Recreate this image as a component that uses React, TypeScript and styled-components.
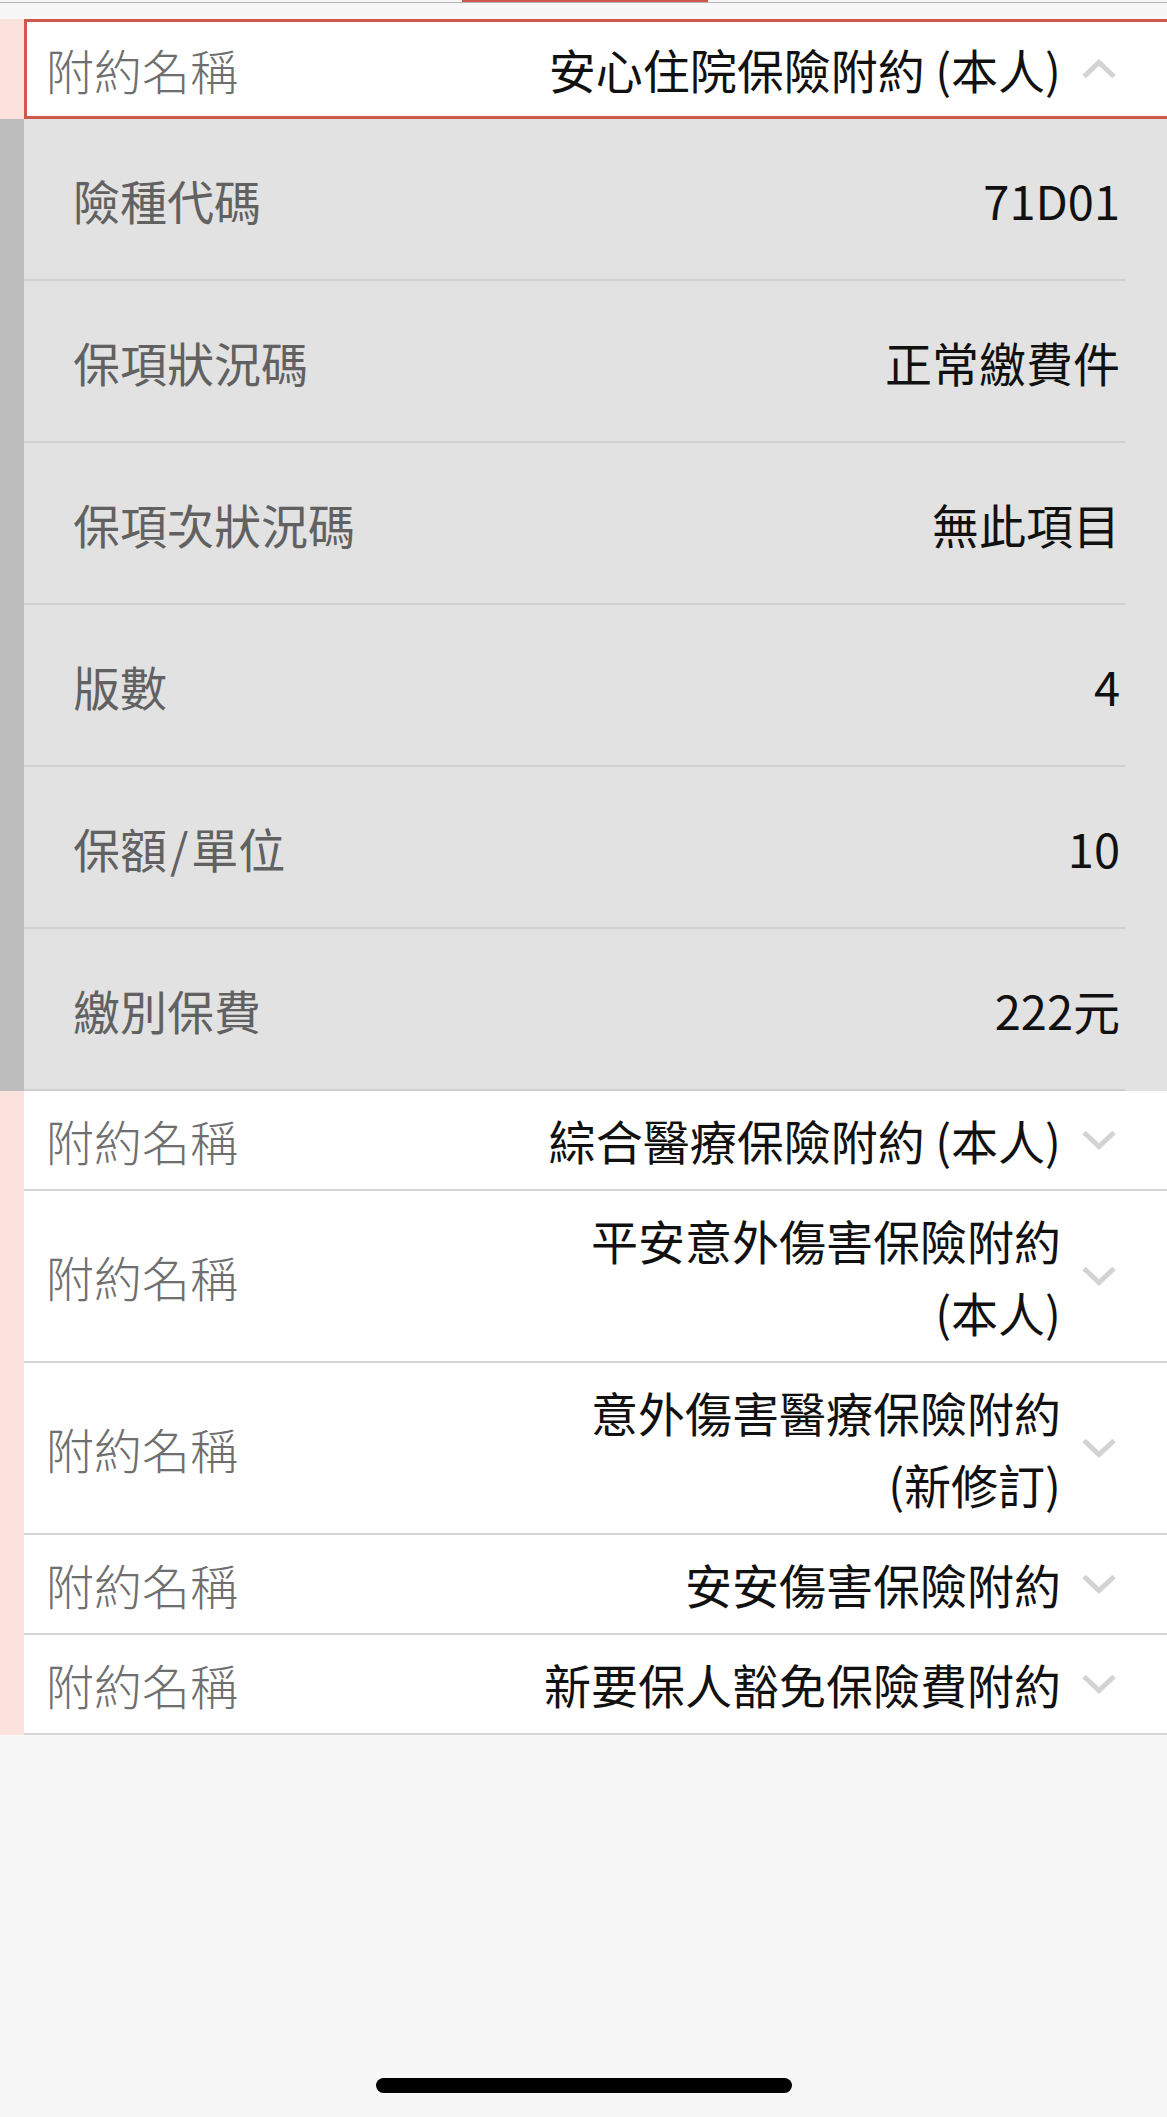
import React from "react";
import styled, { createGlobalStyle } from "styled-components";

type Detail = { label: string; value: string };
type Rider = { label: string; value: string; open?: boolean; details?: Detail[] };

const riders: Rider[] = [
  {
    label: "附約名稱",
    value: "安心住院保險附約 (本人)",
    open: true,
    details: [
      { label: "險種代碼", value: "71D01" },
      { label: "保項狀況碼", value: "正常繳費件" },
      { label: "保項次狀況碼", value: "無此項目" },
      { label: "版數", value: "4" },
      { label: "保額\u200a/\u200a單位", value: "10" },
      { label: "繳別保費", value: "222元" },
    ],
  },
  { label: "附約名稱", value: "綜合醫療保險附約 (本人)" },
  { label: "附約名稱", value: "平安意外傷害保險附約\n(本人)" },
  { label: "附約名稱", value: "意外傷害醫療保險附約\n(新修訂)" },
  { label: "附約名稱", value: "安安傷害保險附約" },
  { label: "附約名稱", value: "新要保人豁免保險費附約" },
];

const Chevron = ({ up }: { up?: boolean }) => (
  <ChevronIcon width="36" height="20" viewBox="0 0 36 20">
    <polyline
      points={up ? "3,17.5 18,3.5 33,17.5" : "3,2.5 18,16.5 33,2.5"}
      fill="none"
      stroke="#d3d3d3"
      strokeWidth="5"
    />
  </ChevronIcon>
);

const App = () => {
  return (
    <Screen>
      <GlobalStyle />
      <TabTrack>
        <TabIndicator />
      </TabTrack>
      <List>
        {riders.map((r, i) => (
          <Item key={i}>
            <HeaderRow>
              <Rail $tone="#fce2dc" />
              <Header $active={!!r.open}>
                <HeaderLabel>{r.label}</HeaderLabel>
                <HeaderValue>{r.value}</HeaderValue>
                <Chevron up={r.open} />
              </Header>
            </HeaderRow>
            {r.open && r.details && (
              <Panel>
                <Rail $tone="#bdbdbd" />
                <DetailList>
                  {r.details.map((d) => (
                    <DetailRow key={d.label}>
                      <DetailLabel>{d.label}</DetailLabel>
                      <DetailValue>{d.value}</DetailValue>
                    </DetailRow>
                  ))}
                </DetailList>
              </Panel>
            )}
          </Item>
        ))}
      </List>
      <Spacer />
      <HomeIndicator />
    </Screen>
  );
};

export default App;

const GlobalStyle = createGlobalStyle`
  body {
    margin: 0;
    background: #f7f7f7;
    font-family: "Noto Sans CJK TC", "Noto Sans", sans-serif;
  }
`;

const Screen = styled.div`
  min-height: 100vh;
  display: flex;
  flex-direction: column;
  background: #f7f7f7;
`;

const TabTrack = styled.div`
  height: 2px;
  border-bottom: 1px solid #b4b4b4;
  display: flex;
`;

const TabIndicator = styled.div`
  margin-left: 462px;
  width: 246px;
  height: 2px;
  background: #d0574b;
`;

const List = styled.div`
  margin-top: 16px;
  display: flex;
  flex-direction: column;
`;

const Item = styled.div`
  display: flex;
  flex-direction: column;
`;

const HeaderRow = styled.div`
  display: flex;
`;

const Rail = styled.div<{ $tone: string }>`
  flex: none;
  width: 24px;
  background: ${(p) => p.$tone};
`;

const Header = styled.div<{ $active: boolean }>`
  flex: 1;
  display: flex;
  align-items: center;
  background: #fff;
  padding: ${(p) => (p.$active ? "11px 50px 11px 19px" : "13px 50px 13px 22px")};
  border: ${(p) => (p.$active ? "3px solid #d0574b" : "none")};
  border-right: none;
  border-bottom: ${(p) => (p.$active ? "3px solid #d0574b" : "2px solid #d4d4d4")};
`;

const HeaderLabel = styled.div`
  flex: none;
  font-size: 48px;
  font-weight: 300;
  line-height: 72px;
  color: #6f6f6f;
`;

const HeaderValue = styled.div`
  flex: 1;
  text-align: right;
  font-size: 47px;
  line-height: 72px;
  color: #111;
  white-space: pre-line;
`;

const ChevronIcon = styled.svg`
  flex: none;
  margin-left: 20px;
`;

const Panel = styled.div`
  display: flex;
`;

const DetailList = styled.div`
  flex: 1;
  background: #e2e2e2;
  padding-right: 42px;
`;

const DetailRow = styled.div`
  height: 160px;
  display: flex;
  align-items: center;
  justify-content: space-between;
  padding: 0 5px 0 49px;
  border-bottom: 2px solid #cfcfcf;
`;

const DetailLabel = styled.div`
  font-size: 47px;
  color: #616161;
  white-space: pre;
`;

const DetailValue = styled.div`
  font-size: 47px;
  color: #111;
`;

const Spacer = styled.div`
  flex: 1;
`;

const HomeIndicator = styled.div`
  width: 416px;
  height: 15px;
  border-radius: 8px;
  background: #000;
  margin: 0 auto 24px;
`;
